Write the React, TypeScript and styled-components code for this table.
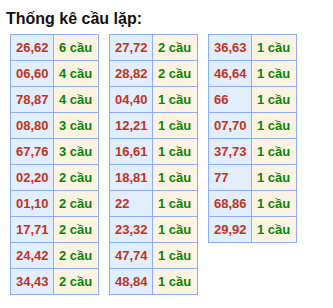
import React from 'react'
import styled, { createGlobalStyle } from 'styled-components'

const GlobalStyle = createGlobalStyle`
  body {
    margin: 0;
    background: #ffffff;
    font-family: 'Liberation Sans', Arial, sans-serif;
  }
`

const Page = styled.div`
  padding: 10px 0 0 6px;
`

const Title = styled.div`
  font-size: 16px;
  font-weight: bold;
  line-height: 18px;
  color: #111111;
  margin-bottom: 6px;
`

const Tables = styled.div`
  display: flex;
  align-items: flex-start;
  gap: 10px;
  padding-left: 4px;
`

const Table = styled.div<{ $first: number }>`
  display: grid;
  grid-template-columns: ${(p) => p.$first}px 45px;
  border-top: 1px solid #8eadf3;
  border-left: 1px solid #8eadf3;
`

const Cell = styled.div<{ $kind: 'pair' | 'count' }>`
  box-sizing: border-box;
  height: 26px;
  display: flex;
  align-items: center;
  padding-left: 5px;
  border-right: 1px solid #8eadf3;
  border-bottom: 1px solid #8eadf3;
  font-size: 13px;
  font-weight: bold;
  background: ${(p) => (p.$kind === 'pair' ? '#e1eefd' : '#fdf3e2')};
  color: ${(p) => (p.$kind === 'pair' ? '#c0341d' : '#0a830a')};
`

const columns: [string, number][][] = [
  [
    ['26,62', 6],
    ['06,60', 4],
    ['78,87', 4],
    ['08,80', 3],
    ['67,76', 3],
    ['02,20', 2],
    ['01,10', 2],
    ['17,71', 2],
    ['24,42', 2],
    ['34,43', 2],
  ],
  [
    ['27,72', 2],
    ['28,82', 2],
    ['04,40', 1],
    ['12,21', 1],
    ['16,61', 1],
    ['18,81', 1],
    ['22', 1],
    ['23,32', 1],
    ['47,74', 1],
    ['48,84', 1],
  ],
  [
    ['36,63', 1],
    ['46,64', 1],
    ['66', 1],
    ['07,70', 1],
    ['37,73', 1],
    ['77', 1],
    ['68,86', 1],
    ['29,92', 1],
  ],
]

export default function App() {
  return (
    <Page>
      <GlobalStyle />
      <Title>Thống kê cầu lặp:</Title>
      <Tables>
        {columns.map((rows, i) => (
          <Table key={i} $first={43}>
            {rows.map(([pair, count]) => (
              <React.Fragment key={pair}>
                <Cell $kind="pair">{pair}</Cell>
                <Cell $kind="count">{count} cầu</Cell>
              </React.Fragment>
            ))}
          </Table>
        ))}
      </Tables>
    </Page>
  )
}
